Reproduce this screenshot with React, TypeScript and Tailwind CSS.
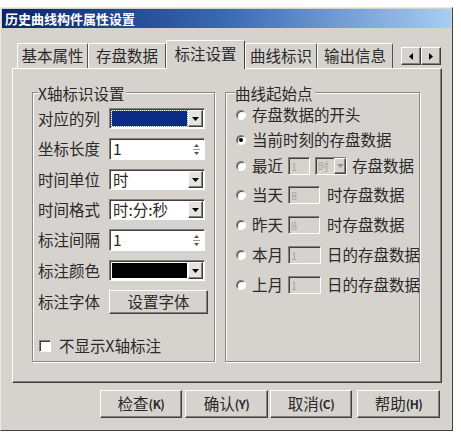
import React from "react";

const FACE = "bg-[#d6d3ce]";
const RAISED =
  "border border-t-white border-l-white border-r-[#404040] border-b-[#404040] shadow-[inset_-1px_-1px_0_#808080]";
const SUNKEN =
  "border border-t-[#808080] border-l-[#808080] border-r-white border-b-white shadow-[inset_1px_1px_0_#404040]";

function DownArrow({ muted }: { muted?: boolean }) {
  return (
    <svg width="7" height="4" viewBox="0 0 7 4">
      <path d="M0 0h7L3.5 4z" fill={muted ? "#9a9893" : "#000"} />
    </svg>
  );
}

function ComboButton({ muted }: { muted?: boolean }) {
  return (
    <span className={`flex h-full w-[15px] shrink-0 items-center justify-center bg-[#e6e4e0] ${RAISED}`}>
      <DownArrow muted={muted} />
    </span>
  );
}

function Combo({ fill, text }: { fill?: string; text?: string }) {
  return (
    <div className={`flex h-[21px] w-[96px] items-stretch bg-white p-[1px] ${SUNKEN}`}>
      <div className="flex flex-1 items-center px-[1px]">
        {fill ? (
          <span
            className={`block h-[15px] w-full ${fill} ${fill === "bg-[#0b2a83]" ? "outline outline-1 outline-dotted outline-[#6f86c8]" : ""}`}
          />
        ) : (
          <span className="pl-[1px] leading-none">{text}</span>
        )}
      </div>
      <ComboButton />
    </div>
  );
}

function Spin({ value }: { value: string }) {
  return (
    <div className={`flex h-[22px] w-[96px] items-stretch bg-white p-[1px] ${SUNKEN}`}>
      <div className="flex flex-1 items-center pl-[2px] leading-none">{value}</div>
      <span className="flex w-[13px] flex-col items-center justify-center gap-[2px]">
        <svg width="5" height="3" viewBox="0 0 5 3">
          <path d="M0 3h5L2.5 0z" fill="#555" />
        </svg>
        <span className="block h-px w-[7px] bg-[#999]" />
        <svg width="5" height="3" viewBox="0 0 5 3">
          <path d="M0 0h5L2.5 3z" fill="#555" />
        </svg>
      </span>
    </div>
  );
}

function Row({ label, children }: { label: string; children: React.ReactNode }) {
  return (
    <div className="flex items-center">
      <span className="w-[71px] shrink-0 leading-none">{label}</span>
      {children}
    </div>
  );
}

function Radio({ checked }: { checked?: boolean }) {
  return (
    <span className="relative flex h-[10px] w-[10px] shrink-0 items-center justify-center rounded-full border border-t-[#7a7a7a] border-l-[#7a7a7a] border-r-white border-b-white bg-white shadow-[inset_1px_1px_0_#505050]">
      {checked && <span className="block h-[4px] w-[4px] rounded-full bg-black" />}
    </span>
  );
}

function Disabled({ w, value }: { w: string; value: string }) {
  return (
    <span className={`flex h-[18px] ${w} shrink-0 items-center ${FACE} pl-[2px] text-[11px] leading-none text-[#a8a6a1] ${SUNKEN}`}>
      {value}
    </span>
  );
}

function RadioRow({
  mt,
  checked,
  children,
}: {
  mt: string;
  checked?: boolean;
  children: React.ReactNode;
}) {
  return (
    <div className={`${mt} flex h-[22px] items-center whitespace-nowrap`}>
      <Radio checked={checked} />
      <div className="ml-[6px] flex items-center leading-none">{children}</div>
    </div>
  );
}

const TABS = [
  { label: "基本属性", w: "w-[71px]" },
  { label: "存盘数据", w: "w-[78px]" },
  { label: "标注设置", w: "w-[79px]", active: true },
  { label: "曲线标识", w: "w-[72px]" },
  { label: "输出信息", w: "w-[76px]" },
];

export default function App() {
  return (
    <div className="h-[436px] w-[461px] bg-white pt-[7px] font-['Noto_Sans_CJK_SC','Noto_Sans',sans-serif] text-[15.5px] text-[#2a2a2a]">
      <div className={`flex h-[424px] w-[453px] flex-col p-[1px] ${FACE} border border-t-[#ebe9e5] border-l-[#ebe9e5] border-r-[#404040] border-b-[#404040]`}>
        <div className="flex h-[19px] items-center bg-gradient-to-r from-[#0a246a] via-[#3a6ab4] to-[#a9cdf2] pl-[3px] text-[13px] font-bold leading-none text-white">
          历史曲线构件属性设置
        </div>

        {/* tab strip */}
        <div className="mt-[12px] flex h-[28px] items-start pl-[15px]">
          {TABS.map((t) =>
            t.active ? (
              <div
                key={t.label}
                className={`relative z-10 flex h-[29px] ${t.w} justify-center rounded-t-[2px] ${FACE} border-t border-l border-r border-t-white border-l-white border-r-[#404040] pt-[3px] leading-none`}
              >
                <span className="mt-[2px]">{t.label}</span>
              </div>
            ) : (
              <div
                key={t.label}
                className={`mt-[3px] flex h-[25px] ${t.w} items-center justify-center rounded-t-[2px] border-t border-l border-r border-t-white border-l-white border-r-[#505050] leading-none`}
              >
                {t.label}
              </div>
            ),
          )}
          <div className="ml-[8px] mt-[7px] flex h-[18px]">
            <span className={`flex w-[20px] items-center justify-center ${RAISED}`}>
              <svg width="4" height="7" viewBox="0 0 4 7">
                <path d="M4 0v7L0 3.5z" fill="#000" />
              </svg>
            </span>
            <span className={`flex w-[20px] items-center justify-center ${RAISED}`}>
              <svg width="4" height="7" viewBox="0 0 4 7">
                <path d="M0 0v7L4 3.5z" fill="#000" />
              </svg>
            </span>
          </div>
        </div>

        {/* panel */}
        <div className="ml-[10px] flex h-[315px] w-[430px] gap-[10px] border border-t-white border-l-white border-r-[#404040] border-b-[#404040] pl-[19px] pt-[23px] shadow-[inset_-1px_-1px_0_#808080]">
          <div className="relative h-[270px] w-[183px] border border-[#8a8884] shadow-[inset_1px_1px_0_white,1px_1px_0_white]">
            <span className={`absolute left-[5px] top-[-10px] ${FACE} pr-[2px] leading-[20px]`}>X轴标识设置</span>
            <div className="flex flex-col gap-[9px] pl-[5px] pt-[15px]">
              <Row label="对应的列">
                <Combo fill="bg-[#0b2a83]" />
              </Row>
              <Row label="坐标长度">
                <Spin value="1" />
              </Row>
              <Row label="时间单位">
                <Combo text="时" />
              </Row>
              <Row label="时间格式">
                <Combo text="时:分:秒" />
              </Row>
              <Row label="标注间隔">
                <Spin value="1" />
              </Row>
              <Row label="标注颜色">
                <Combo fill="bg-black" />
              </Row>
              <Row label="标注字体">
                <button
                  type="button"
                  className={`flex h-[24px] w-[99px] items-center justify-center leading-none ${FACE} ${RAISED}`}
                >
                  设置字体
                </button>
              </Row>
            </div>
            <div className="ml-[6px] mt-[22px] flex h-[20px] items-center">
              <span className={`block h-[12px] w-[12px] bg-white ${SUNKEN}`} />
              <span className="ml-[8px] leading-none">不显示X轴标注</span>
            </div>
          </div>

          <div className="relative h-[270px] w-[195px] border border-[#8a8884] shadow-[inset_1px_1px_0_white,1px_1px_0_white]">
            <span className={`absolute left-[9px] top-[-10px] ${FACE} pr-[2px] leading-[20px]`}>曲线起始点</span>
            <div className="flex flex-col pl-[10px] pt-[11px]">
              <RadioRow mt="mt-0">存盘数据的开头</RadioRow>
              <RadioRow mt="mt-[3px]" checked>
                当前时刻的存盘数据
              </RadioRow>
              <RadioRow mt="mt-[4px]">
                <span className="w-[36px]">最近</span>
                <Disabled w="w-[22px]" value="1" />
                <span className={`ml-[5px] flex h-[18px] w-[32px] items-stretch ${FACE} ${SUNKEN}`}>
                  <span className="flex flex-1 items-center pl-[2px] text-[11px] text-[#a8a6a1]">时</span>
                  <span className={`flex w-[12px] items-center justify-center ${RAISED}`}>
                    <DownArrow muted />
                  </span>
                </span>
                <span className="ml-[5px]">存盘数据</span>
              </RadioRow>
              <RadioRow mt="mt-[7px]">
                <span className="w-[36px]">当天</span>
                <Disabled w="w-[32px]" value="8" />
                <span className="ml-[7px]">时存盘数据</span>
              </RadioRow>
              <RadioRow mt="mt-[8px]">
                <span className="w-[36px]">昨天</span>
                <Disabled w="w-[32px]" value="8" />
                <span className="ml-[7px]">时存盘数据</span>
              </RadioRow>
              <RadioRow mt="mt-[8px]">
                <span className="w-[36px]">本月</span>
                <Disabled w="w-[33px]" value="1" />
                <span className="ml-[6px]">日的存盘数据</span>
              </RadioRow>
              <RadioRow mt="mt-[8px]">
                <span className="w-[36px]">上月</span>
                <Disabled w="w-[33px]" value="1" />
                <span className="ml-[6px]">日的存盘数据</span>
              </RadioRow>
            </div>
          </div>
        </div>

        {/* buttons */}
        <div className="mt-[7px] flex pl-[98px]">
          {[
            { t: "检查", k: "(K)", cls: "w-[82px]" },
            { t: "确认", k: "(Y)", cls: "ml-[3px] w-[83px]" },
            { t: "取消", k: "(C)", cls: "ml-[2px] w-[82px]" },
            { t: "帮助", k: "(H)", cls: "ml-[5px] w-[83px]" },
          ].map((b) => (
            <button
              key={b.t}
              type="button"
              className={`flex h-[28px] ${b.cls} items-center justify-center leading-none ${FACE} ${RAISED}`}
            >
              {b.t}
              <span className="text-[12px] font-bold tracking-[-0.5px]">{b.k}</span>
            </button>
          ))}
        </div>
      </div>
    </div>
  );
}
